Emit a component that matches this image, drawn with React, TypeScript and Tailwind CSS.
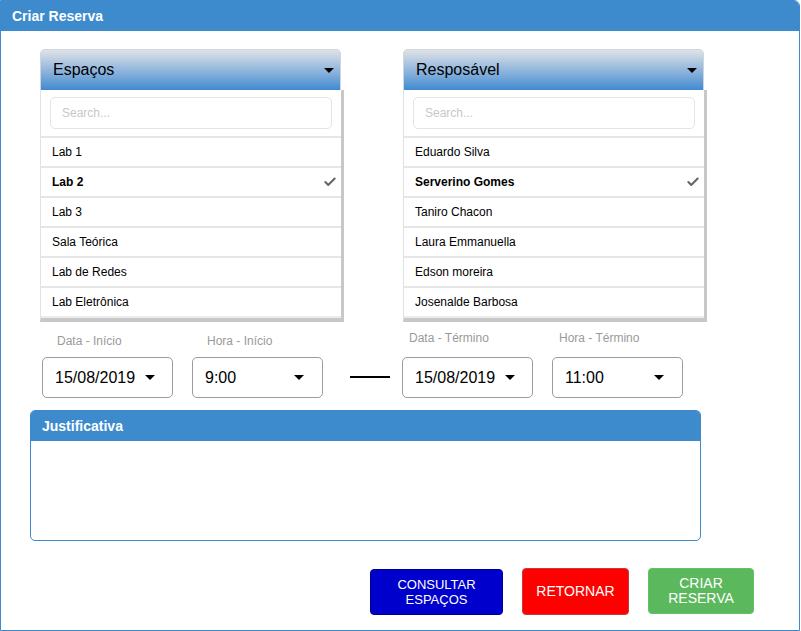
import { Check } from 'lucide-react';

const espacos = ['Lab 1', 'Lab 2', 'Lab 3', 'Sala Teórica', 'Lab de Redes', 'Lab Eletrônica'];
const responsaveis = ['Eduardo Silva', 'Serverino Gomes', 'Taniro Chacon', 'Laura Emmanuella', 'Edson moreira', 'Josenalde Barbosa'];

function Caret() {
  return <span className="w-0 h-0 border-l-[5px] border-r-[5px] border-t-[5px] border-l-transparent border-r-transparent border-t-black" />;
}

function Picker({ title, items, selected }: { title: string; items: string[]; selected: number }) {
  return (
    <div className="w-[304px]">
      <div className="h-[41px] w-[301px] rounded-t-[5px] bg-gradient-to-b from-[#dfe2e6] to-[#3f8ad0] flex items-center justify-between pl-[12px] pr-[6px] border border-[#cfd6de] border-b-0">
        <span className="text-[16px] text-black">{title}</span>
        <Caret />
      </div>
      <div className="w-[304px] bg-white border-l border-[#e2e2e2] border-r-[3px] border-r-[#c8c8c8] border-b-[4px] border-b-[#c8c8c8]">
        <div className="px-[9px] pt-[7px] pb-[7px] border-b-2 border-[#e6e6e6]">
          <div className="h-[32px] rounded-[5px] border border-[#e4e4e4] flex items-center px-[11px] text-[12px] text-[#c8c8c8]">
            Search...
          </div>
        </div>
        {items.map((it, i) => (
          <div
            key={it}
            className={`h-[30px] flex items-center justify-between pl-[11px] pr-[4px] text-[12px] text-black border-b-2 ${i < items.length - 1 ? 'border-[#e6e6e6]' : 'border-[#ececec]'} ${i === selected ? 'font-bold' : ''}`}
          >
            <span>{it}</span>
            {i === selected && <Check size={14} strokeWidth={3.5} className="text-[#666]" />}
          </div>
        ))}
      </div>
    </div>
  );
}

function Select({ label, value, wide, end }: { label: string; value: string; wide?: boolean; end?: boolean }) {
  return (
    <div className="w-[131px] flex flex-col">
      <span
        className={`text-[12px] text-[#9a9a9a] h-[14px] leading-[14px] ${end ? 'pl-[7px] mb-[12px]' : 'pl-[15px] mt-[3px] mb-[9px]'}`}
      >
        {label}
      </span>
      <div
        className={`h-[41px] rounded-[5px] border border-[#9c9c9c] flex items-center pl-[12px] text-[16px] text-black ${wide ? 'pr-[18px] justify-between' : 'gap-[10px]'}`}
      >
        <span>{value}</span>
        <Caret />
      </div>
    </div>
  );
}

export default function App() {
  return (
    <div className="w-[801px] h-[631px] bg-white font-['Liberation_Sans',Arial,sans-serif]">
      <div className="w-[800px] h-[631px] border border-[#3d8bcd] rounded-tr-[6px] flex flex-col">
        <div className="h-[30px] bg-[#3d8bcd] flex items-center pl-[11px] text-white text-[14px] font-bold rounded-tr-[5px]">
          Criar Reserva
        </div>

        <div className="flex gap-[59px] pl-[39px] mt-[18px]">
          <Picker title="Espaços" items={espacos} selected={1} />
          <Picker title="Resposável" items={responsaveis} selected={1} />
        </div>

        <div className="flex items-end pl-[41px] mt-[9px]">
          <div className="flex gap-[19px]">
            <Select label="Data - Início" value="15/08/2019" />
            <Select label="Hora - Início" value="9:00" wide />
          </div>
          <div className="w-[40px] h-[2px] bg-black ml-[27px] mr-[12px] mb-[20px]" />
          <div className="flex gap-[19px]">
            <Select label="Data - Término" value="15/08/2019" end />
            <Select label="Hora - Término" value="11:00" wide end />
          </div>
        </div>

        <div className="ml-[29px] mt-[12px] w-[671px] h-[131px] border border-[#3d8bcd] rounded-[5px] flex flex-col">
          <div className="h-[30px] bg-[#3d8bcd] rounded-t-[4px] flex items-center pl-[11px] text-white text-[14px] font-bold">
            Justificativa
          </div>
        </div>

        <div className="flex items-start pl-[369px] mt-[27px] gap-[19px]">
          <button className="w-[133px] h-[46px] mt-[1px] rounded-[4px] bg-[#0000cc] border border-[#00008a] text-white text-[13px] leading-[15px]">
            CONSULTAR<br />ESPAÇOS
          </button>
          <button className="w-[107px] h-[47px] rounded-[4px] bg-[#ff0000] border border-[#c23b3b] text-white text-[14px]">
            RETORNAR
          </button>
          <button className="w-[106px] h-[46px] rounded-[4px] bg-[#5cb85c] border border-[#63c063] text-white text-[14px] leading-[15px]">
            CRIAR<br />RESERVA
          </button>
        </div>
      </div>
    </div>
  );
}
